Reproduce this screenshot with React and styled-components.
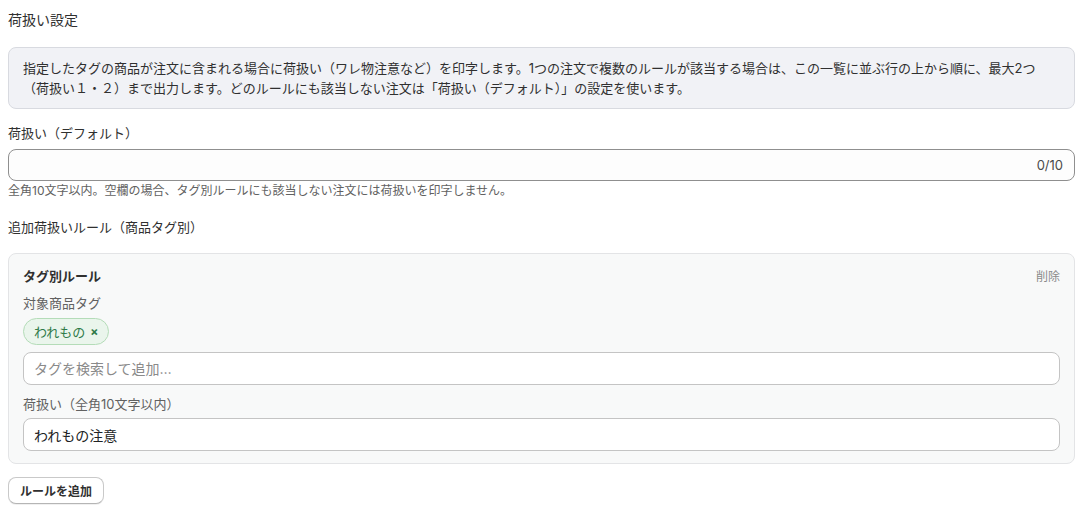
import React from "react";
import styled, { createGlobalStyle } from "styled-components";

const Global = createGlobalStyle`
  html, body { margin: 0; padding: 0; background: #ffffff; }
  body {
    font-family: "Inter", "Noto Sans CJK JP", sans-serif;
    color: #303030;
    -webkit-font-smoothing: antialiased;
  }
  * { box-sizing: border-box; }
`;

const Page = styled.div`
  padding: 10px 11px 10px 8px;
  display: flex;
  flex-direction: column;
`;

const Title = styled.h2`
  margin: 0;
  font-size: 14px;
  line-height: 20px;
  font-weight: 400;
  color: #303030;
`;

const InfoBox = styled.div`
  margin-top: 17px;
  background: #f1f2f6;
  border: 1px solid #d8dae0;
  border-radius: 8px;
  padding: 10px 14px;
  font-size: 13px;
  line-height: 20px;
  color: #303030;
`;

const Field = styled.div`
  display: flex;
  flex-direction: column;
  gap: ${(p) => p.$gap || 7}px;
  margin-top: ${(p) => p.$top || 0}px;
`;

const Label = styled.label`
  font-size: 13px;
  line-height: 18px;
  color: ${(p) => (p.$muted ? "#616161" : "#303030")};
`;

const InputWrap = styled.div`
  display: flex;
  align-items: center;
  height: ${(p) => p.$h || 33}px;
  border: 1px solid ${(p) => p.$border || "#c4c4c4"};
  border-radius: 8px;
  background: ${(p) => p.$bg || "#ffffff"};
  padding: 0 11px 0 10px;
`;

const TextInput = styled.input`
  flex: 1;
  min-width: 0;
  border: none;
  outline: none;
  background: transparent;
  font-family: inherit;
  font-size: 14px;
  color: #202223;
  padding: 0;
  &::placeholder { color: #8a8a8a; }
`;

const Counter = styled.span`
  font-size: 13px;
  color: #4a4a4a;
`;

const Help = styled.div`
  margin-top: 2px;
  font-size: 12px;
  line-height: 16px;
  color: #616161;
`;

const Card = styled.div`
  margin-top: 17px;
  background: #f8f9f9;
  border: 1px solid #e3e4e6;
  border-radius: 8px;
  padding: 14px 14px 12px;
  display: flex;
  flex-direction: column;
`;

const CardHead = styled.div`
  display: flex;
  justify-content: space-between;
  align-items: center;
  height: 16px;
  margin-top: -1px;
  margin-bottom: 2px;
`;

const CardTitle = styled.div`
  font-size: 13px;
  font-weight: 700;
  color: #303030;
`;

const DeleteLink = styled.button`
  border: none;
  background: none;
  padding: 0;
  font-family: inherit;
  font-size: 12px;
  color: #8a8a8a;
  cursor: pointer;
`;

const Tags = styled.div`
  display: flex;
  gap: 6px;
  margin-bottom: 1px;
`;

const Tag = styled.span`
  display: inline-flex;
  align-items: center;
  gap: 5px;
  height: 27px;
  padding: 0 9px 0 10px;
  border-radius: 14px;
  background: #eaf5ec;
  border: 1px solid #b4dcb8;
  color: #2e7a48;
  font-size: 13px;
`;

const TagX = styled.span`
  font-size: 12px;
  font-weight: 700;
  line-height: 1;
`;

const AddButton = styled.button`
  align-self: flex-start;
  margin-top: 13px;
  height: 27px;
  padding: 0 11px;
  border: 1px solid #c9c9c9;
  border-bottom-color: #b5b5b5;
  border-radius: 8px;
  background: #ffffff;
  box-shadow: 0 1px 0 rgba(0, 0, 0, 0.06);
  font-family: inherit;
  font-size: 12px;
  font-weight: 700;
  color: #303030;
  cursor: pointer;
`;

export default function App() {
  return (
    <>
      <Global />
      <Page>
        <Title>荷扱い設定</Title>
        <InfoBox>
          指定したタグの商品が注文に含まれる場合に荷扱い（ワレ物注意など）を印字します。1つの注文で複数のルールが該当する場合は、この一覧に並ぶ行の上から順に、最大2つ（荷扱い１・２）まで出力します。どのルールにも該当しない注文は「荷扱い（デフォルト）」の設定を使います。
        </InfoBox>

        <Field $top={15}>
          <Label>荷扱い（デフォルト）</Label>
          <InputWrap $h={32} $border="#8f8f8f" $bg="#fdfdfd">
            <TextInput defaultValue="" />
            <Counter>0/10</Counter>
          </InputWrap>
        </Field>
        <Help>全角10文字以内。空欄の場合、タグ別ルールにも該当しない注文には荷扱いを印字しません。</Help>

        <Field $top={19}>
          <Label>追加荷扱いルール（商品タグ別）</Label>
        </Field>

        <Card>
          <CardHead>
            <CardTitle>タグ別ルール</CardTitle>
            <DeleteLink>削除</DeleteLink>
          </CardHead>
          <Field $top={9} $gap={6}>
            <Label $muted>対象商品タグ</Label>
            <Tags>
              <Tag>
                われもの<TagX>×</TagX>
              </Tag>
            </Tags>
            <InputWrap>
              <TextInput placeholder="タグを検索して追加…" />
            </InputWrap>
          </Field>
          <Field $top={10} $gap={5}>
            <Label $muted>荷扱い（全角10文字以内）</Label>
            <InputWrap>
              <TextInput defaultValue="われもの注意" />
            </InputWrap>
          </Field>
        </Card>

        <AddButton>ルールを追加</AddButton>
      </Page>
    </>
  );
}
